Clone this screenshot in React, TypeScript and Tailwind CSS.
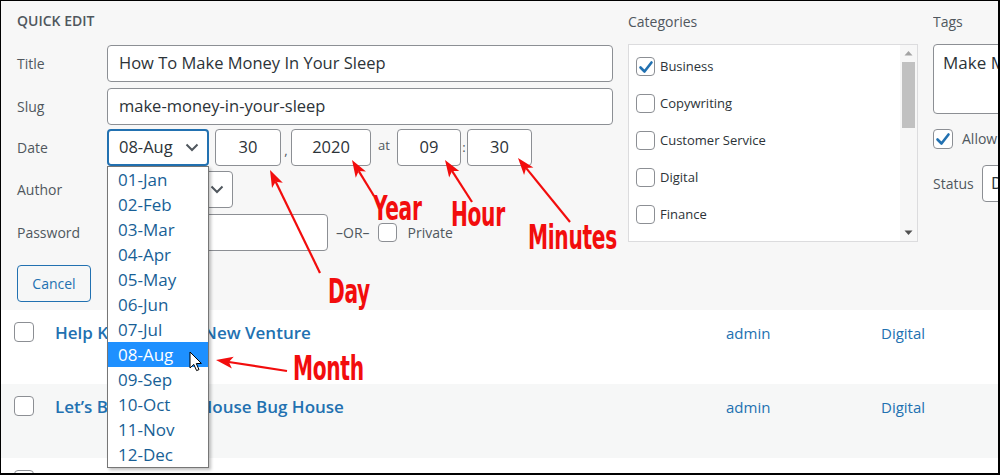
import React from "react";

const RED = "#f20d0d";

function Arrow({ x1, y1, x2, y2 }: { x1: number; y1: number; x2: number; y2: number }) {
  const dx = x2 - x1;
  const dy = y2 - y1;
  const L = Math.hypot(dx, dy);
  const ux = dx / L;
  const uy = dy / L;
  const hl = 17;
  const hw = 6;
  const bx = x2 - ux * hl;
  const by = y2 - uy * hl;
  const px = -uy;
  const py = ux;
  const pts = `${x2},${y2} ${bx + px * hw},${by + py * hw} ${bx + ux * 4},${by + uy * 4} ${bx - px * hw},${by - py * hw}`;
  return (
    <g>
      <line x1={x1} y1={y1} x2={bx + ux * 4} y2={by + uy * 4} stroke={RED} strokeWidth={2.2} />
      <polygon points={pts} fill={RED} />
    </g>
  );
}

function Chevron() {
  return (
    <svg width="14" height="9" viewBox="0 0 14 9" className="shrink-0">
      <path d="M1.5 1.5 L7 7 L12.5 1.5" fill="none" stroke="#50575e" strokeWidth="2" />
    </svg>
  );
}

function Check({ checked = false, size = 19 }: { checked?: boolean; size?: number }) {
  return (
    <div
      className="shrink-0 rounded-[4px] border border-[#8c8f94] bg-white flex items-center justify-center"
      style={{ width: size, height: size }}
    >
      {checked && (
        <svg width="16" height="16" viewBox="0 0 16 16">
          <path d="M2.5 8.5 L6.5 12.5 L13.5 3.5" fill="none" stroke="#2271b1" strokeWidth="2.6" strokeLinecap="round" strokeLinejoin="round" />
        </svg>
      )}
    </div>
  );
}

const months = [
  "01-Jan",
  "02-Feb",
  "03-Mar",
  "04-Apr",
  "05-May",
  "06-Jun",
  "07-Jul",
  "08-Aug",
  "09-Sep",
  "10-Oct",
  "11-Nov",
  "12-Dec",
];

const cats = ["Business", "Copywriting", "Customer Service", "Digital", "Finance"];

function Label({ children }: { children: React.ReactNode }) {
  return <div className="w-[90px] shrink-0 text-[14px] text-[#50575e]">{children}</div>;
}

function Box({ w, children, center = false }: { w: string; children?: React.ReactNode; center?: boolean }) {
  return (
    <div
      className={`${w} h-[37px] shrink-0 rounded-[4px] border border-[#8c8f94] bg-white flex items-center text-[16.5px] text-[#2c3338] ${
        center ? "justify-center" : "px-[11px]"
      }`}
    >
      {children}
    </div>
  );
}

export default function App() {
  return (
    <div className="w-[1000px] h-[475px] relative overflow-hidden bg-white border-t border-l border-r-2 border-b-2 border-black font-['Open_Sans',sans-serif]">
      {/* Quick edit panel */}
      <div className="h-[309px] bg-[#f7f7f7] flex pl-[16px]">
        {/* left column */}
        <div className="w-[596px] shrink-0 flex flex-col">
          <div className="h-[44px] pt-[11px] text-[14px] font-semibold leading-[18px] text-[#50575e]">QUICK EDIT</div>
          <div className="flex items-center">
            <Label>Title</Label>
            <Box w="w-[506px]">How To Make Money In Your Sleep</Box>
          </div>
          <div className="flex items-center mt-[6px]">
            <Label>Slug</Label>
            <Box w="w-[506px]">make-money-in-your-sleep</Box>
          </div>
          <div className="flex items-center mt-[4px]">
            <Label>Date</Label>
            <div className="w-[102px] h-[37px] shrink-0 rounded-[4px] border-2 border-[#2271b1] bg-white flex items-center justify-between pl-[10px] pr-[8px] text-[16.5px] text-[#2c3338]">
              <span>08-Aug</span>
              <Chevron />
            </div>
            <div className="ml-[6px]">
              <Box w="w-[66px]" center>
                30
              </Box>
            </div>
            <div className="w-[10px] text-center text-[13px] text-[#50575e] pt-[6px]">,</div>
            <Box w="w-[80px]" center>
              2020
            </Box>
            <div className="w-[26px] text-center text-[13px] text-[#50575e] pb-[4px]">at</div>
            <Box w="w-[64px]" center>
              09
            </Box>
            <div className="w-[6px] text-center text-[13px] text-[#50575e]">:</div>
            <Box w="w-[65px]" center>
              30
            </Box>
          </div>
          <div className="flex items-center mt-[5px]">
            <Label>Author</Label>
            <div className="w-[126px] h-[37px] shrink-0 rounded-[4px] border border-[#8c8f94] bg-white flex items-center justify-between pl-[10px] pr-[8px] text-[16.5px] text-[#2c3338]">
              <span>admin</span>
              <Chevron />
            </div>
          </div>
          <div className="flex items-center mt-[6px]">
            <Label>Password</Label>
            <Box w="w-[221px]" />
            <span className="ml-[8px] text-[14px] text-[#50575e]">–OR–</span>
            <div className="ml-[8px]">
              <Check size={19} />
            </div>
            <span className="ml-[11px] text-[14px] text-[#50575e]">Private</span>
          </div>
          <div className="mt-[14px]">
            <div className="w-[74px] h-[37px] rounded-[4px] border border-[#2271b1] bg-[#f6f7f7] flex items-center justify-center text-[14px] text-[#2271b1]">
              Cancel
            </div>
          </div>
        </div>

        {/* categories */}
        <div className="w-[290px] ml-[15px] shrink-0 flex flex-col">
          <div className="h-[43px] pt-[12px] text-[14px] leading-[18px] text-[#50575e]">Categories</div>
          <div className="h-[198px] border border-[#dcdcde] bg-white flex">
            <div className="flex-1 pl-[7px] pt-[3px] flex flex-col">
              {cats.map((c, i) => (
                <div key={c} className="h-[37px] flex items-center gap-[5px]">
                  <Check checked={i === 0} size={19} />
                  <span className="text-[13px] text-[#2c3338]">{c}</span>
                </div>
              ))}
            </div>
            <div className="w-[17px] bg-[#f7f7f7] flex flex-col items-center">
              <svg width="17" height="17" viewBox="0 0 17 17">
                <path d="M4.5 10.5 L8.5 6 L12.5 10.5 Z" fill="#a3a3a3" />
              </svg>
              <div className="w-[13px] h-[66px] bg-[#c1c1c1]" />
              <div className="flex-1" />
              <svg width="17" height="17" viewBox="0 0 17 17">
                <path d="M4.5 6.5 L8.5 11 L12.5 6.5 Z" fill="#505050" />
              </svg>
            </div>
          </div>
        </div>

        {/* tags */}
        <div className="ml-[15px] flex-1 min-w-0 flex flex-col overflow-hidden">
          <div className="h-[43px] pt-[12px] text-[14px] leading-[18px] text-[#50575e]">Tags</div>
          <div className="w-[200px] shrink-0 h-[70px] rounded-[4px] border border-[#8c8f94] bg-white pl-[9px] pt-[5px] text-[17px] text-[#2c3338] whitespace-nowrap">
            Make Money Online
          </div>
          <div className="flex items-center mt-[14px] whitespace-nowrap">
            <Check checked size={20} />
            <span className="ml-[9px] shrink-0 text-[14px] text-[#50575e]">Allow Comments</span>
          </div>
          <div className="flex items-center mt-[16px] whitespace-nowrap">
            <span className="text-[14px] text-[#50575e] w-[49px] shrink-0">Status</span>
            <div className="w-[120px] shrink-0 h-[37px] rounded-[4px] border border-[#8c8f94] bg-white flex items-center pl-[8px] text-[16.5px] text-[#2c3338]">
              Draft
            </div>
          </div>
        </div>
      </div>

      {/* post rows */}
      {[
        { t: "Help Kickstart My New Venture", bg: "bg-white" },
        { t: "Let’s Build A Nice House Bug House", bg: "bg-[#f6f7f7]" },
        { t: "", bg: "bg-white" },
      ].map((r, i) => (
        <div key={i} className={`h-[74px] ${r.bg} flex items-start pt-[12px] pl-[13px]`}>
          <Check size={20} />
          {r.t && (
            <>
              <div className="ml-[21px] w-[671px] text-[17px] leading-[22px] font-semibold text-[#2271b1] whitespace-nowrap">{r.t}</div>
              <div className="w-[155px] text-[15px] leading-[22px] text-[#2271b1]">admin</div>
              <div className="text-[15px] leading-[22px] text-[#2271b1]">Digital</div>
            </>
          )}
        </div>
      ))}

      {/* month dropdown list */}
      <div className="absolute left-[106px] top-[165px] w-[102px] h-[302px] border border-[#767676] bg-white shadow-[2px_2px_3px_rgba(0,0,0,0.25)] flex flex-col">
        {months.map((m) => (
          <div
            key={m}
            className={`h-[25px] shrink-0 flex items-center pl-[10px] text-[17px] ${
              m === "08-Aug" ? "bg-[#1e90ff] text-white" : "text-[#185f96]"
            }`}
          >
            {m}
          </div>
        ))}
      </div>

      {/* arrows & cursor */}
      <svg className="absolute left-[-1px] top-[-1px] pointer-events-none" width="1000" height="475" viewBox="0 0 1000 475">
        <Arrow x1={320} y1={273} x2={270} y2={170} />
        <Arrow x1={374} y1={196} x2={352} y2={160} />
        <Arrow x1={472} y1={202} x2={445} y2={160} />
        <Arrow x1={570} y1={222} x2={518} y2={158} />
        <Arrow x1={287} y1={371} x2={216} y2={360} />
        <path
          d="M190 352 L190 368 L193.8 364.4 L196.6 370.6 L199 369.6 L196.3 363.6 L201.4 363.4 Z"
          fill="white"
          stroke="black"
          strokeWidth="1"
          strokeLinejoin="round"
        />
      </svg>

      {/* annotation labels */}
      {[
        { t: "Day", cls: "left-[327px] top-[273px]" },
        { t: "Year", cls: "left-[372px] top-[190px]" },
        { t: "Hour", cls: "left-[450px] top-[196px]" },
        { t: "Minutes", cls: "left-[527px] top-[219px]" },
        { t: "Month", cls: "left-[292px] top-[350px]" },
      ].map((a) => (
        <div
          key={a.t}
          className={`absolute ${a.cls} text-[34px] leading-[34px] font-bold text-[#f20d0d] font-['Liberation_Sans_Narrow','DejaVu_Sans_Condensed',sans-serif] tracking-[-0.5px] scale-x-[0.66] origin-left`}
        >
          {a.t}
        </div>
      ))}
    </div>
  );
}
